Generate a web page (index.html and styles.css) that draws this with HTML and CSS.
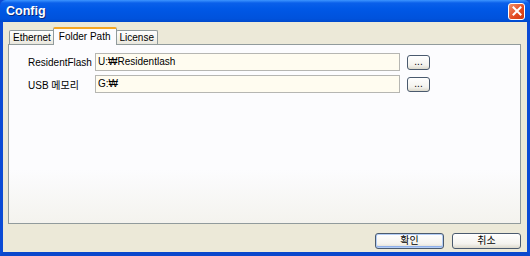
FILE: index.html
```html
<!DOCTYPE html>
<html lang="ko">
<head>
    <meta charset="UTF-8">
    <title>Config</title>
    <link rel="stylesheet" href="styles.css">
</head>
<body>
    <div class="window">
        <div class="titlebar">
            <span class="title">Config</span>
            <span class="close-btn">
                <svg width="10" height="10" viewBox="0 0 10 10">
                    <path d="M1.5 1.5 L8.5 8.5 M8.5 1.5 L1.5 8.5" stroke="#fff" stroke-width="2" stroke-linecap="square"/>
                </svg>
            </span>
        </div>
        <div class="client">
            <div class="tabs">
                <span class="tab">Ethernet</span>
                <span class="tab selected">Folder Path</span>
                <span class="tab">License</span>
            </div>
            <div class="panel">
                <!-- path rows -->
                <div class="row">
                    <label class="label">ResidentFlash</label>
                    <div class="field">U:₩Residentlash</div>
                    <button class="browse">...</button>
                </div>
                <div class="row">
                    <label class="label">USB 메모리</label>
                    <div class="field">G:₩</div>
                    <button class="browse">...</button>
                </div>
            </div>
            <div class="footer">
                <button class="btn default">확인</button>
                <button class="btn">취소</button>
            </div>
        </div>
    </div>
</body>
</html>
```

FILE: styles.css
```css
body {
    margin: 0;
    font-family: "Liberation Sans", "Noto Sans CJK KR", sans-serif;
    font-size: 10px;
    color: #000;
}
.window {
    width: 530px;
    height: 256px;
    box-sizing: border-box;
    display: flex;
    flex-direction: column;
    background: #0a4fd8;
    border-left: 3px solid #0b4bd5;
    border-right: 3px solid #0b4bd5;
    border-bottom: 4px solid #0a47cc;
}
.titlebar {
    height: 22px;
    margin: 0 -3px;
    padding: 0 5px 0 6px;
    display: flex;
    align-items: center;
    justify-content: space-between;
    background: linear-gradient(#3d95ff 0, #0a60ea 3px, #0058e6 40%, #0052dc 85%, #0049cc 100%);
    border-radius: 6px 6px 0 0;
}
.title {
    color: #fff;
    font-weight: bold;
    font-size: 12.5px;
    text-shadow: 1px 1px 0 #0a2a7a;
}
.close-btn {
    width: 15px;
    height: 15px;
    display: flex;
    align-items: center;
    justify-content: center;
    background: linear-gradient(135deg, #f0906a, #e2491f 60%, #cc3a12);
    border: 1px solid #fff;
    border-radius: 3px;
}
.client {
    flex: 1;
    display: flex;
    flex-direction: column;
    background: #ece9d8;
    padding: 5px 6px 0 5px;
}
.tabs {
    display: flex;
    align-items: flex-end;
    padding-left: 1px;
    height: 17px;
    position: relative;
    z-index: 1;
}
.tab {
    height: 13px;
    padding: 0 3px;
    line-height: 13px;
    background: linear-gradient(#ffffff, #f3f2ec 60%, #e9e7dd);
    border: 1px solid #919b9c;
    border-bottom: none;
    border-radius: 2px 2px 0 0;
}
.tab.selected {
    height: 16px;
    line-height: 15px;
    margin: 0 -1px -1px -2px;
    padding: 0 5px;
    background: #fcfcfe;
    border-top: 2px solid #f5a623;
    position: relative;
    z-index: 2;
}
.panel {
    height: 180px;
    box-sizing: border-box;
    border: 1px solid #919b9c;
    background: linear-gradient(#fcfcfe 70%, #f4f3ee);
    padding: 8px 0 0 19px;
    display: flex;
    flex-direction: column;
    gap: 4px;
}
.row {
    display: flex;
    align-items: center;
}
.label {
    width: 67px;
    flex-shrink: 0;
    white-space: nowrap;
}
.field {
    width: 305px;
    height: 18px;
    box-sizing: border-box;
    border: 1px solid #b6b6b2;
    background: #fffcf0;
    padding-left: 2px;
    line-height: 16px;
}
.browse, .btn {
    font-family: inherit;
    font-size: 10px;
    padding: 0;
    border: 1px solid #4a5a6e;
    border-radius: 3px;
    background: linear-gradient(#ffffff, #f4f3ee 70%, #dcd9cc);
    color: #000;
}
.browse {
    width: 23px;
    height: 15px;
    margin-left: 7px;
    line-height: 8px;
}
.footer {
    display: flex;
    justify-content: flex-end;
    gap: 8px;
    padding-top: 9px;
}
.btn {
    width: 69px;
    height: 16px;
    line-height: 14px;
}
.btn.default {
    box-shadow: inset 0 0 0 1px #b3cdf4, inset 0 -1px 0 1px #8fb0ea;
}
```
